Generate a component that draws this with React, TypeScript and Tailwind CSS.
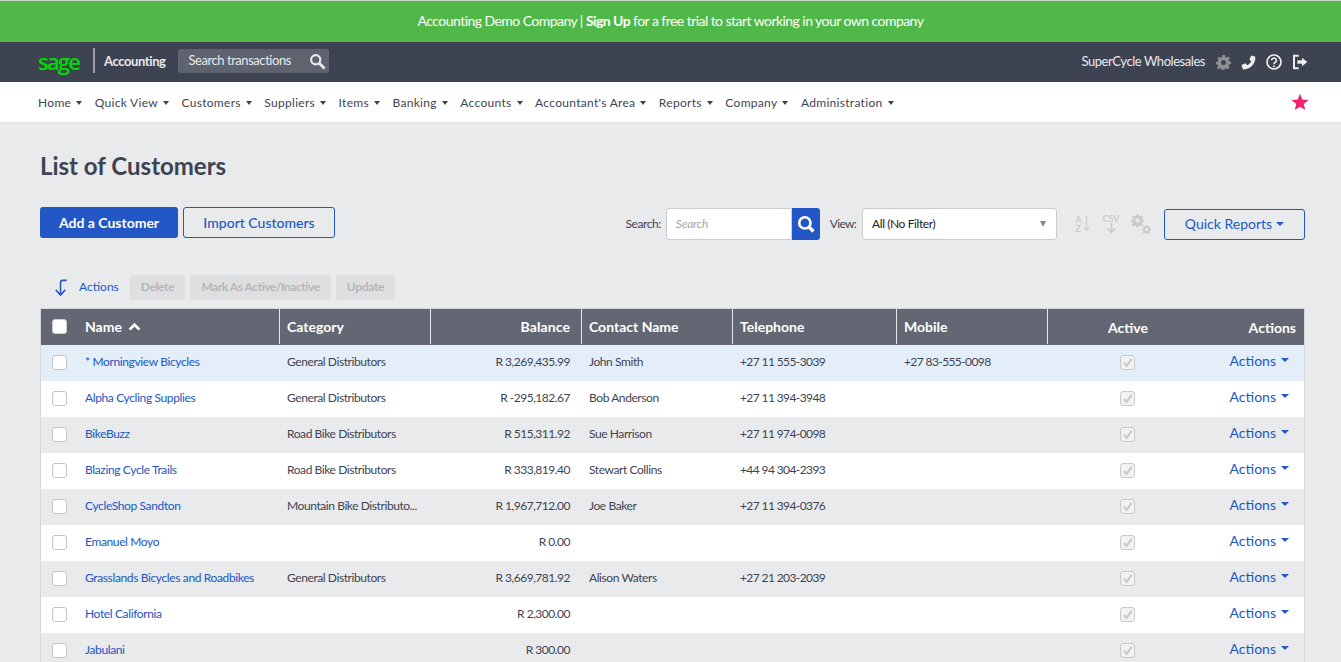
import React from "react";

const navItems = ["Home","Quick View","Customers","Suppliers","Items","Banking","Accounts","Accountant's Area","Reports","Company","Administration"];
const rows = [
  ["* Morningview Bicycles","General Distributors","R 3,269,435.99","John Smith","+27 11 555-3039","+27 83-555-0098"],
  ["Alpha Cycling Supplies","General Distributors","R -295,182.67","Bob Anderson","+27 11 394-3948",""],
  ["BikeBuzz","Road Bike Distributors","R 515,311.92","Sue Harrison","+27 11 974-0098",""],
  ["Blazing Cycle Trails","Road Bike Distributors","R 333,819.40","Stewart Collins","+44 94 304-2393",""],
  ["CycleShop Sandton","Mountain Bike Distributo...","R 1,967,712.00","Joe Baker","+27 11 394-0376",""],
  ["Emanuel Moyo","","R 0.00","","",""],
  ["Grasslands Bicycles and Roadbikes","General Distributors","R 3,669,781.92","Alison Waters","+27 21 203-2039",""],
  ["Hotel California","","R 2,300.00","","",""],
  ["Jabulani","","R 300.00","","",""],
];
const cols = "grid grid-cols-[239px_151px_151px_151px_164px_151px_120px_1fr]";
const Caret = ({ c = "border-t-[#3f4452]" }: { c?: string }) => (
  <span className={`inline-block w-0 h-0 border-x-[3px] border-x-transparent border-t-[4px] ${c}`} />
);
const BigCaret = ({ c }: { c: string }) => (
  <span className={`inline-block w-0 h-0 border-x-[4px] border-x-transparent border-t-[4px] ${c}`} />
);
const Gear = ({ className }: { className: string }) => (
  <svg viewBox="0 0 24 24" className={className} fill="currentColor"><path fillRule="evenodd" d="M10 1h4l.6 3 2.300 1 2.600-1.700 2.800 2.800L20 8.700l1 2.300 3 .6v3.800l-3 .6-1 2.300 1.700 2.600-2.800 2.800-2.600-1.700-2.300 1-.6 3h-4l-.6-3-2.300-1-2.600 1.700-2.800-2.800L4 18.700l-1-2.300-3-.6V12l3-.6 1-2.300-1.700-2.600 2.800-2.800L7.700 5.300 10 4.300zM12 9a4 4 0 1 0 0 8 4 4 0 0 0 0-8z" transform="translate(0 -1)"/></svg>
);

export default function App() {
  return (
    <div className="h-[662px] overflow-hidden bg-[#e9eaec] font-['Lato',sans-serif] text-[#3f4452]">
      <div className="h-[42px] pb-[2px] bg-[#50b848] border-t border-t-[#c9d3c8] flex items-center justify-center text-white text-[14px] tracking-[-0.55px]">
        <span>Accounting Demo Company | <b>Sign Up</b> for a free trial to start working in your own company</span>
      </div>
      <div className="h-10 bg-[#3d4351] flex items-center pl-[38px] pr-[33px] text-white">
        <span className="w-[42px] text-[#00dc00] text-[22px] leading-none font-semibold font-['Open_Sans',sans-serif] tracking-[-1.8px] mb-[3px]">sage</span>
        <span className="ml-[13px] w-[2px] h-[25px] bg-[#9a9da5] mb-[3px]" />
        <b className="ml-[9px] text-[13px] text-[#e8e9eb] tracking-[-0.4px]">Accounting</b>
        <div className="ml-[12px] w-[151px] h-6 mb-[2px] rounded-[2px] bg-[#5f636f] flex items-center justify-between pl-[11px] pr-[3px] text-[13px] text-[#e8e9eb] tracking-[-0.45px]">
          <span>Search transactions</span>
          <svg viewBox="0 0 24 24" className="w-[17px] h-[17px] text-[#e8e9eb]" fill="none" stroke="currentColor" strokeWidth="3"><circle cx="9.500" cy="9.500" r="6.500"/><path d="M14.500 14.500 22 22" strokeWidth="4"/></svg>
        </div>
        <span className="ml-auto text-[13px] text-[#e8e9eb] tracking-[-0.45px]">SuperCycle Wholesales</span>
        <Gear className="ml-[11px] w-[15px] h-[15px] text-[#8e9096]" />
        <svg viewBox="0 0 24 24" className="ml-[10px] w-[15px] h-[15px] text-[#eeeeee]" fill="currentColor"><path d="M22 2.500 17.500 1c-.7-.2-1.400.2-1.700.8l-2 4.600c-.2.600 0 1.200.4 1.600l2.200 1.800c-1.400 2.800-3.600 5-6.400 6.400L8 13.800c-.4-.5-1-.6-1.600-.4l-4.600 2c-.6.300-1 1-.8 1.700L2.500 22c.2.600.7 1 1.300 1C14.500 23 23 14.400 23 3.800c0-.6-.4-1.100-1-1.300z"/></svg>
        <svg viewBox="0 0 24 24" className="ml-[10px] w-[16px] h-[16px] text-[#eeeeee]" fill="none" stroke="currentColor" strokeWidth="2.500"><circle cx="12" cy="12" r="10.500"/><path d="M8.500 9.500a3.500 3.500 0 1 1 5.500 3c-1.300.8-2 1.400-2 3"/><circle cx="12" cy="18.500" r="1" fill="currentColor" strokeWidth="1"/></svg>
        <svg viewBox="0 0 24 24" className="ml-[10px] w-[16px] h-[16px] text-[#eeeeee]" fill="none" stroke="currentColor" strokeWidth="3"><path d="M10 2.500H3v19h7"/><path d="M8 12h8" strokeWidth="5"/><path d="M15 5.500 23 12l-8 6.500z" fill="currentColor" stroke="none"/></svg>
      </div>
      <div className="h-[41px] pt-[2px] bg-white border-b border-b-[#e3e4e6] flex items-center pl-[38px] pr-[32px] text-[12px] tracking-[0.3px] text-[#3f4452]">
        <div className="flex items-center gap-[12.5px]">
          {navItems.map((n) => (
            <span key={n} className="flex items-center gap-[5px]">{n}<Caret /></span>
          ))}
        </div>
        <svg viewBox="0 0 24 24" className="ml-auto -mt-[3px] w-[18px] h-[18px] text-[#f5206e]" fill="currentColor"><path d="M12 1l3.100 7.600 8.200.6-6.300 5.300 2 8L12 18.200l-7 4.300 2-8L.7 9.200l8.200-.6z"/></svg>
      </div>

      <div className="pl-[40px] pr-[36px]">
        <h1 className="mt-[27px] h-[32px] text-[24px] leading-[32px] font-bold text-[#3d4351] tracking-[0px]">List of Customers</h1>
        <div className="mt-[25px] flex items-center h-[33px]">
          <button className="-mt-[2px] w-[138px] h-[31px] rounded-[3px] bg-[#2257c5] text-white text-[14px] font-bold">Add a Customer</button>
          <button className="-mt-[2px] ml-[5px] w-[152px] h-[31px] rounded-[3px] border border-[#2257c5] text-[#2257c5] text-[14px] font-medium">Import Customers</button>
          <span className="ml-auto text-[12px] tracking-[-0.45px]">Search:</span>
          <div className="ml-[5px] w-[126px] h-[32px] bg-white border border-[#cccccc] rounded-l-[3px] flex items-center pl-[9px] text-[12px] italic text-[#a8a8a8] tracking-[-0.2px]">Search</div>
          <div className="w-[28px] h-[32px] bg-[#2257c5] rounded-r-[3px] flex items-center justify-center">
            <svg viewBox="0 0 24 24" className="w-[18px] h-[18px] text-white" fill="none" stroke="currentColor" strokeWidth="3.500"><circle cx="10.500" cy="10.500" r="7.500"/><path d="m16 16 6 6" strokeWidth="4.500"/></svg>
          </div>
          <span className="ml-[10px] text-[12px] tracking-[-0.7px]">View:</span>
          <div className="ml-[6px] w-[195px] h-[32px] bg-white border border-[#cccccc] rounded-[3px] flex items-center justify-between pl-[9px] pr-[10px] text-[12px] text-[#222222] tracking-[-0.4px]">
            <span>All (No Filter)</span>
            <span className="w-0 h-0 border-x-[3.5px] border-x-transparent border-t-[6px] border-t-[#888888]" />
          </div>
          <div className="ml-[17px] w-[17px] h-[20px] flex items-center justify-center text-[#c9cbce] text-[9px] font-bold leading-[9px] gap-[1px]">
            <span className="flex flex-col"><span>A</span><span>Z</span></span>
            <svg viewBox="0 0 8 20" className="w-[7px] h-[19px]" fill="none" stroke="currentColor" strokeWidth="1.300"><path d="M4 1v17M1 14.500 4 18l3-3.500"/></svg>
          </div>
          <div className="ml-[11px] w-[18px] h-[20px] flex flex-col items-center text-[#c9cbce] text-[9px] font-bold leading-[9px]">
            <span>CSV</span>
            <svg viewBox="0 0 12 12" className="w-[11px] h-[11px]" fill="none" stroke="currentColor" strokeWidth="1.800"><path d="M6 0v10M2 6l4 4.500L10 6"/></svg>
          </div>
          <div className="relative ml-[11px] w-[20px] h-[20px] text-[#c9cbce]">
            <Gear className="absolute left-0 top-0 w-[13px] h-[13px]" />
            <Gear className="absolute right-0 bottom-0 w-[9px] h-[9px]" />
          </div>
          <button className="ml-[13px] mt-[2px] pb-[2px] w-[141px] h-[31px] rounded-[3px] border border-[#2257c5] text-[#2257c5] text-[14px] flex items-center justify-center gap-[4px]">Quick Reports <BigCaret c="border-t-[#2257c5]" /></button>
        </div>

        <div className="mt-[34px] h-[26px] flex items-center text-[12px]">
          <svg viewBox="0 0 16 20" className="ml-[13px] w-[16px] h-[19px] text-[#2257c5]" fill="none" stroke="currentColor" strokeWidth="1.600"><path d="M14 2.500H9.500Q7.500 2.500 7.500 5v12.500M2.500 12.500l5 5.500 5-5.500"/></svg>
          <span className="ml-[10px] w-[41px] text-[#2257c5]">Actions</span>
          <span className="ml-[10px] w-[55px] h-[25px] rounded-[3px] bg-[#dedfe1] text-[#b4b6b9] font-bold flex items-center justify-center tracking-[-0.35px]">Delete</span>
          <span className="ml-[5px] w-[141px] h-[25px] rounded-[3px] bg-[#dedfe1] text-[#b4b6b9] font-bold flex items-center justify-center tracking-[-0.45px]">Mark As Active/Inactive</span>
          <span className="ml-[5px] w-[59px] h-[25px] rounded-[3px] bg-[#dedfe1] text-[#b4b6b9] font-bold flex items-center justify-center tracking-[-0.3px]">Update</span>
        </div>

        <div className="mt-[8px] border-x border-[#d5d6d8]">
          <div className={`${cols} h-[37px] bg-[#636773] text-white text-[14px] font-bold items-stretch border-t border-t-[#d5d6d8]`}>
            <div className="flex items-center border-r border-r-[#e8e8e8] mb-[1px]">
              <span className="ml-[11px] w-[15px] h-[15px] bg-white rounded-[3px] border border-[#cccccc]" />
              <span className="ml-[18px]">Name</span>
              <svg viewBox="0 0 14 10" className="ml-[6px] w-[13px] h-[9px]" fill="none" stroke="currentColor" strokeWidth="3"><path d="M1.500 8.500 7 3l5.500 5.500"/></svg>
            </div>
            <div className="flex items-center pl-[7px] border-r border-r-[#e8e8e8] mb-[1px]">Category</div>
            <div className="flex items-center justify-end pr-[11px] border-r border-r-[#e8e8e8] mb-[1px] tracking-[0.1px]">Balance</div>
            <div className="flex items-center pl-[7px] border-r border-r-[#e8e8e8] mb-[1px]">Contact Name</div>
            <div className="flex items-center pl-[7px] border-r border-r-[#e8e8e8] mb-[1px]">Telephone</div>
            <div className="flex items-center pl-[7px] border-r border-r-[#e8e8e8] mb-[1px]">Mobile</div>
            <div className="flex items-center justify-center pl-[40px]">Active</div>
            <div className="flex items-center justify-end pr-[8px]">Actions</div>
          </div>
          {rows.map((r, i) => (
            <div key={r[0]} className={`${cols} h-[36px] items-center text-[12px] tracking-[-0.42px] ${i === 0 ? "bg-[#e3eef9]" : i % 2 === 1 ? "bg-white" : "bg-[#e9eaec]"}`}>
              <div className="flex items-center pb-[2px]">
                <span className="ml-[11px] w-[15px] h-[15px] bg-white rounded-[3px] border border-[#c4c5c8]" />
                <span className="ml-[18px] text-[#2257c5] tracking-[-0.37px]">{r[0]}</span>
              </div>
              <div className="pl-[7px] pb-[2px] whitespace-nowrap">{r[1]}</div>
              <div className="pr-[12px] pb-[2px] text-right tracking-[-0.5px]">{r[2]}</div>
              <div className="pl-[7px] pb-[2px]">{r[3]}</div>
              <div className="pl-[7px] pb-[2px] tracking-[-0.6px]">{r[4]}</div>
              <div className="pl-[7px] pb-[2px] tracking-[-0.6px]">{r[5]}</div>
              <div className="flex justify-center pl-[38px] pb-[2px]">
                <span className="w-[15px] h-[15px] bg-[#f1f2f3] rounded-[3px] border border-[#c9cacc] flex items-center justify-center">
                  <svg viewBox="0 0 12 12" className="w-[11px] h-[11px] text-[#c9cacc]" fill="none" stroke="currentColor" strokeWidth="2.400"><path d="m2 6.500 3 3L10.500 2"/></svg>
                </span>
              </div>
              <div className="flex items-center justify-end gap-[5px] pr-[15px] text-[14px] tracking-normal text-[#2257c5] -mt-[6px]">Actions <BigCaret c="border-t-[#2257c5]" /></div>
            </div>
          ))}
        </div>
      </div>
    </div>
  );
}
